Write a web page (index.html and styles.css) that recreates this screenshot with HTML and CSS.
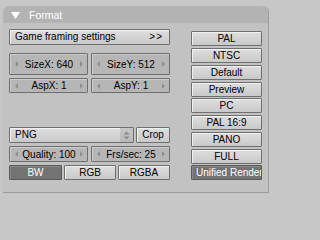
FILE: index.html
```html
<!DOCTYPE html>
<html>
<head>
<meta charset="utf-8">
<link rel="stylesheet" href="styles.css">
</head>
<body>
<div class="panel">
  <div class="header">
    <svg class="tri" width="9" height="7" viewBox="0 0 9 7"><polygon points="0,0 9,0 4.5,7" fill="#ffffff"/></svg>
    <span class="title">Format</span>
  </div>
  <div class="content">
    <div class="leftcol">
      <div class="btn game"><span>Game framing settings</span><span class="gt">&gt;&gt;</span></div>
      <div class="row size">
        <div class="num"><i class="al"></i><span>SizeX: 640</span><i class="ar"></i></div>
        <div class="num"><i class="al"></i><span>SizeY: 512</span><i class="ar"></i></div>
      </div>
      <div class="row asp">
        <div class="num"><i class="al"></i><span>AspX: 1</span><i class="ar"></i></div>
        <div class="num"><i class="al"></i><span>AspY: 1</span><i class="ar"></i></div>
      </div>
      <div class="spacer"></div>
      <div class="row menurow">
        <div class="btn menu"><span class="mtext">PNG</span><span class="mico"><svg width="7" height="9" viewBox="0 0 7 9"><polygon points="0.5,3.5 6.5,3.5 3.5,0.5" fill="#8a8a8a"/><polygon points="0.5,5.5 6.5,5.5 3.5,8.5" fill="#8a8a8a"/></svg></span></div>
        <div class="btn crop">Crop</div>
      </div>
      <div class="row qrow">
        <div class="num"><i class="al"></i><span>Quality: 100</span><i class="ar"></i></div>
        <div class="num"><i class="al"></i><span>Frs/sec: 25</span><i class="ar"></i></div>
      </div>
      <div class="row crow">
        <div class="btn on bw">BW</div>
        <div class="btn rgb">RGB</div>
        <div class="btn rgb">RGBA</div>
      </div>
    </div>
    <div class="rightcol">
      <div class="btn rb">PAL</div>
      <div class="btn rb">NTSC</div>
      <div class="btn rb">Default</div>
      <div class="btn rb g1">Preview</div>
      <div class="btn rb">PC</div>
      <div class="btn rb">PAL 16:9</div>
      <div class="btn rb">PANO</div>
      <div class="btn rb g1">FULL</div>
      <div class="btn rb on uni"><span>Unified Render</span></div>
    </div>
  </div>
</div>
</body>
</html>
```
FILE: styles.css
```css
html, body {
  margin: 0;
  padding: 0;
}
body {
  width: 276px;
  height: 200px;
  background: #c7c7c7;
  font-family: "Liberation Sans", Arial, sans-serif;
  font-size: 10px;
  color: #000;
  overflow: hidden;
}
.panel {
  margin: 6px 0 0 3px;
  width: 265px;
  height: 186px;
  background: #c2c2c2;
  border-right: 1px solid #9c9c9c;
  border-bottom: 1px solid #9c9c9c;
  border-radius: 6px 6px 0 0;
  display: flex;
  flex-direction: column;
}
.header {
  height: 17px;
  background: #b3b3b3;
  border-radius: 6px 6px 0 0;
  display: flex;
  align-items: center;
  padding-left: 8px;
  color: #fff;
  font-size: 10.5px;
}
.tri {
  margin-right: 9px;
  margin-top: 1px;
}
.title {
  margin-top: 1px;
}
.content {
  display: flex;
  padding: 6px 0 0 6px;
  gap: 21px;
}
.leftcol {
  width: 161px;
  height: 151px;
  display: flex;
  flex-direction: column;
}
.spacer {
  flex: 1;
}
.btn {
  box-sizing: border-box;
  border: 1px solid #6f6f6f;
  background: linear-gradient(#dedede, #c9c9c9);
  box-shadow: inset 1px 1px 0 #f0f0f0;
  border-radius: 1px;
  display: flex;
  align-items: center;
  justify-content: center;
  white-space: nowrap;
  overflow: hidden;
  line-height: 1;
}
.game {
  height: 16px;
  justify-content: space-between;
  padding: 0 6px 0 5px;
}
.gt {
  letter-spacing: 1px;
}
.row {
  display: flex;
}
.num {
  box-sizing: border-box;
  flex: 1;
  border: 1px solid #6f6f6f;
  background: #b6b6b6;
  box-shadow: inset 1px 1px 0 #cdcdcd;
  border-radius: 1px;
  display: flex;
  align-items: center;
  justify-content: space-between;
  padding: 0 4px 0 5px;
  white-space: nowrap;
}
.al, .ar {
  width: 0;
  height: 0;
  border-top: 3px solid transparent;
  border-bottom: 3px solid transparent;
}
.al { border-right: 3px solid #8e8e8e; }
.ar { border-left: 3px solid #8e8e8e; }
.size {
  margin-top: 8px;
  height: 22px;
  gap: 3px;
}
.asp {
  margin-top: 3px;
  height: 15px;
  gap: 3px;
}
.menurow {
  height: 16px;
  gap: 2px;
}
.menu {
  flex: 1;
  justify-content: space-between;
  padding: 0;
}
.mtext {
  padding-left: 5px;
}
.mico {
  width: 13px;
  height: 100%;
  background: linear-gradient(#c8c8c8, #b8b8b8);
  display: flex;
  align-items: center;
  justify-content: center;
}
.crop {
  width: 34px;
}
.qrow {
  margin-top: 3px;
  height: 16px;
  gap: 3px;
}
.crow {
  margin-top: 3px;
  height: 15px;
  gap: 2px;
}
.bw { width: 53px; }
.rgb { flex: 1; }
.on {
  background: #737373;
  box-shadow: inset 1px 1px 0 #8a8a8a;
  color: #fff;
  border-color: #5a5a5a;
}
.rightcol {
  width: 71px;
  padding-top: 2px;
  display: flex;
  flex-direction: column;
  gap: 2px;
}
.rb {
  height: 15px;
}
.g1 {
  margin-bottom: -1px;
}
.uni {
  justify-content: flex-start;
  padding-left: 4px;
}
```
